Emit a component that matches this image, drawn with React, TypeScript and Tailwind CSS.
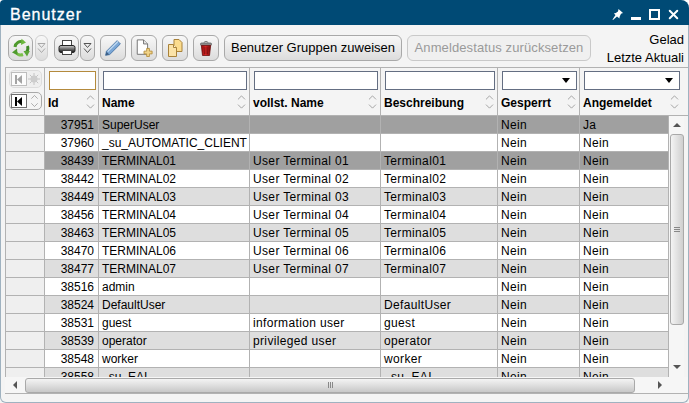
import { X, ChevronUp, ChevronDown } from "lucide-react";

type User = { id: number; name: string; full: string; desc: string; locked: string; online: string; tone: "dark" | "light" | "white" };

const users: User[] = [
  { id: 37951, name: "SuperUser", full: "", desc: "", locked: "Nein", online: "Ja", tone: "dark" },
  { id: 37960, name: "_su_AUTOMATIC_CLIENT", full: "", desc: "", locked: "Nein", online: "Nein", tone: "white" },
  { id: 38439, name: "TERMINAL01", full: "User Terminal 01", desc: "Terminal01", locked: "Nein", online: "Nein", tone: "dark" },
  { id: 38442, name: "TERMINAL02", full: "User Terminal 02", desc: "Terminal02", locked: "Nein", online: "Nein", tone: "white" },
  { id: 38449, name: "TERMINAL03", full: "User Terminal 03", desc: "Terminal03", locked: "Nein", online: "Nein", tone: "light" },
  { id: 38456, name: "TERMINAL04", full: "User Terminal 04", desc: "Terminal04", locked: "Nein", online: "Nein", tone: "white" },
  { id: 38463, name: "TERMINAL05", full: "User Terminal 05", desc: "Terminal05", locked: "Nein", online: "Nein", tone: "light" },
  { id: 38470, name: "TERMINAL06", full: "User Terminal 06", desc: "Terminal06", locked: "Nein", online: "Nein", tone: "white" },
  { id: 38477, name: "TERMINAL07", full: "User Terminal 07", desc: "Terminal07", locked: "Nein", online: "Nein", tone: "light" },
  { id: 38516, name: "admin", full: "", desc: "", locked: "Nein", online: "Nein", tone: "white" },
  { id: 38524, name: "DefaultUser", full: "", desc: "DefaultUser", locked: "Nein", online: "Nein", tone: "light" },
  { id: 38531, name: "guest", full: "information user", desc: "guest", locked: "Nein", online: "Nein", tone: "white" },
  { id: 38539, name: "operator", full: "privileged user", desc: "operator", locked: "Nein", online: "Nein", tone: "light" },
  { id: 38548, name: "worker", full: "", desc: "worker", locked: "Nein", online: "Nein", tone: "white" },
  { id: 38558, name: "_su_EAI", full: "", desc: "_su_EAI", locked: "Nein", online: "Nein", tone: "light" },
];

const toneClass = {
  dark: "bg-[#a0a0a0]",
  light: "bg-[#dedede]",
  white: "bg-white",
};

function ToolButton({ children, className = "w-[26px]" }: { children: React.ReactNode; className?: string }) {
  return (
    <div className={`flex h-[26px] shrink-0 items-center justify-center rounded-[6px] border border-[#a9a9a9] bg-gradient-to-b from-[#f8f8f8] to-[#dcdcdc] ${className}`}>
      {children}
    </div>
  );
}

function SortArrows({ className = "" }: { className?: string }) {
  return (
    <div className={`flex flex-col items-center text-[#8c8c8c] ${className}`}>
      <ChevronUp size={13} strokeWidth={1.4} className="-mb-[2px]" />
      <ChevronDown size={13} strokeWidth={1.4} className="-mt-[2px]" />
    </div>
  );
}

function MoreIcon({ color }: { color: string }) {
  return (
    <svg width="9" height="12" viewBox="0 0 9 12" fill="none" stroke={color}>
      <path d="M1 1.500h7L4.500 5.500Z" />
      <path d="M1 6.500 4.500 10.500 8 6.500" />
    </svg>
  );
}

function HeaderCell({ label, width, children }: { label: string; width: string; children: React.ReactNode }) {
  return (
    <div className={`flex h-[47px] shrink-0 flex-col border-r border-[#b2b2b2] pt-[3px] pr-[2px] pl-[4px] ${width}`}>
      {children}
      <div className="relative mt-[5px] flex items-center">
        <span className="-ml-[1px] text-[12px] leading-[16px] font-bold text-black">{label}</span>
        <SortArrows className="absolute -top-[4px] -right-[1px]" />
      </div>
    </div>
  );
}

function FilterInput({ accent = false, dropdown = false }: { accent?: boolean; dropdown?: boolean }) {
  return (
    <div className={`relative h-[19px] w-full shrink-0 border bg-white ${accent ? "border-[#b48a3c]" : "border-[#646e82]"}`}>
      {dropdown && <div className="absolute top-[6px] right-[6px] h-0 w-0 border-x-[4px] border-t-[5px] border-x-transparent border-t-black" />}
    </div>
  );
}

function RefreshIcon() {
  return (
    <svg width="20" height="20" viewBox="0 0 20 20" fill="none">
      <path d="M4 9a6 6 0 0 1 8-5" stroke="#4f9a2d" strokeWidth="3" />
      <path d="M10.500 0.800 15 4.500 10 7Z" fill="#6cb83e" />
      <path d="M16.500 8a6.500 6.500 0 0 1-2 7" stroke="#3f8a28" strokeWidth="3" />
      <path d="M12.500 13 16 18.500 18.800 13Z" fill="#5aa535" />
      <path d="M12 16.500a6.500 6.500 0 0 1-8-3" stroke="#7ac04a" strokeWidth="3" />
      <path d="M1 14.500 6 10.500 6.500 17Z" fill="#4f9a2d" />
    </svg>
  );
}

function PrintIcon() {
  return (
    <svg width="18" height="16" viewBox="0 0 18 16">
      <defs>
        <linearGradient id="pr" x1="0" y1="0" x2="0" y2="1">
          <stop offset="0" stopColor="#ccc" />
          <stop offset="1" stopColor="#111" />
        </linearGradient>
      </defs>
      <rect x="4.500" y="0.500" width="9" height="6" fill="#fff" stroke="#444" />
      <rect x="1" y="5.500" width="16" height="7" rx="2" fill="url(#pr)" stroke="#222" />
      <rect x="4.500" y="10.500" width="9" height="4" fill="#fff" stroke="#444" />
    </svg>
  );
}

function PencilIcon() {
  return (
    <svg width="18" height="18" viewBox="0 0 22 22">
      <path d="M3 15 16 2l4 4L7 19l-5 1Z" fill="#7ba7d6" stroke="#3f6d9f" />
      <path d="M4.500 15.500 17 3" stroke="#c4dcf2" strokeWidth="1.500" />
      <path d="M3 15.500 2 20l4.500-1Z" fill="#3c5f86" />
    </svg>
  );
}

function NewPageIcon() {
  return (
    <svg width="18" height="18" viewBox="0 0 20 20">
      <path d="M2.500 1h7l4.500 4.500V17H2.500Z" fill="#fff" stroke="#6a6a6a" />
      <path d="M9.500 1v4.500H14" fill="#e8e8e8" stroke="#6a6a6a" />
      <path d="M13 10.500h3v3h3v3h-3v3h-3v-3h-3v-3h3Z" fill="#f2d488" stroke="#b58f3c" />
    </svg>
  );
}

function CopyIcon() {
  return (
    <svg width="16" height="18" viewBox="0 0 16 18">
      <path d="M7 .5h5l3 3v9H7Z" fill="#fbdc8e" stroke="#a9823a" />
      <path d="M1.500 5.500h5l3 3v9h-8Z" fill="#fbe3a8" stroke="#a9823a" />
      <path d="M6.500 5.500v3h3" fill="#fff3cf" stroke="#a9823a" />
    </svg>
  );
}

function TrashIcon() {
  return (
    <svg width="14" height="17" viewBox="0 0 18 20">
      <defs>
        <linearGradient id="tr" x1="0" y1="0" x2="1" y2="0">
          <stop offset="0" stopColor="#8e0d0d" />
          <stop offset="0.450" stopColor="#ee2a2a" />
          <stop offset="1" stopColor="#7a0808" />
        </linearGradient>
      </defs>
      <path d="M6.500 2.500a2.500 1.500 0 0 1 5 0" fill="none" stroke="#555" />
      <rect x="2" y="3" width="14" height="3" rx="1" fill="#9a9a9a" stroke="#555" />
      <path d="M3 6h12l-1.500 13h-9Z" fill="url(#tr)" stroke="#6a0b0b" />
      <path d="M6.500 7.500l.500 10M9 7.500v10M11.500 7.500l-.500 10" stroke="#6a0b0b" />
    </svg>
  );
}

function PinIcon() {
  return (
    <svg width="11" height="11" viewBox="0 0 11 11" fill="#fff">
      <path d="M6.500 0 11 4 9 4.800 7.500 8 7.500 9.500 5 7.500 1 11 0.500 10.500 3.500 6 1.800 4.500 3.800 4 6 2.500Z" />
    </svg>
  );
}

function SunIcon() {
  return (
    <svg width="12" height="12" viewBox="0 0 12 12" stroke="#b8b8b8">
      <path d="M6 0v12M0 6h12M1.800 1.800l8.400 8.400M10.200 1.800 1.800 10.200" />
      <circle cx="6" cy="6" r="3.500" fill="#c4c4c4" stroke="none" />
    </svg>
  );
}

function FirstIcon({ color, border }: { color: string; border: string }) {
  return (
    <div className={`flex h-[14px] w-[16px] items-center justify-center border bg-white ${border}`}>
      <svg width="8" height="9" viewBox="0 0 8 9" fill={color}>
        <rect x="0" y="0" width="2" height="9" />
        <path d="M7 0v9L2 4.500Z" />
      </svg>
    </div>
  );
}

export default function App() {
  return (
    <div className="flex h-[403px] w-[689px] flex-col overflow-hidden rounded-tl-[4px] rounded-tr-[8px] bg-[#f4f4f4] font-['Liberation_Sans',Arial,sans-serif] text-[12px] text-black">
      <div className="flex h-[25px] shrink-0 items-center justify-between bg-[#004a75] pt-[4px] pr-[10px] pl-[10px]">
        <span className="text-[16px] leading-[21px] font-normal tracking-[1px] text-white [-webkit-text-stroke:0.3px_white]">Benutzer</span>
        <div className="flex items-center gap-[8px] text-white">
          <PinIcon />
          <div className="mt-[7px] h-[3px] w-[10px] bg-white" />
          <div className="h-[11px] w-[11px] border-2 border-white" />
          <X size={15} strokeWidth={3.2} className="-mx-[2px]" />
        </div>
      </div>

      <div className="flex min-h-0 flex-1 flex-col rounded-b-[6px] border-x border-b border-[#9fb2c0] pl-[4px]">
        <div className="flex h-[42px] shrink-0 items-center pt-[4px]">
          <ToolButton className="ml-[3px] w-[25px] rounded-[7px]"><RefreshIcon /></ToolButton>
          <ToolButton className="ml-[2px] w-[13px] border-[#cfcfcf]"><MoreIcon color="#a8a8a8" /></ToolButton>
          <ToolButton className="ml-[6px] w-[25px] rounded-[7px]"><PrintIcon /></ToolButton>
          <ToolButton className="ml-[1px] w-[15px]"><MoreIcon color="#555" /></ToolButton>
          <ToolButton className="ml-[5px] w-[26px]"><PencilIcon /></ToolButton>
          <ToolButton className="ml-[5px] w-[26px]"><NewPageIcon /></ToolButton>
          <ToolButton className="ml-[5px] w-[26px]"><CopyIcon /></ToolButton>
          <ToolButton className="ml-[5px] w-[26px]"><TrashIcon /></ToolButton>
          <ToolButton className="ml-[5px] w-[178px] text-[13px]">Benutzer Gruppen zuweisen</ToolButton>
          <div className="ml-[5px] flex h-[26px] w-[184px] shrink-0 items-center justify-center rounded-[6px] border border-[#c9c9c9] bg-[#f0f0f0] text-[13px] tracking-[0.1px] text-[#9a9a9a]">
            Anmeldestatus zurücksetzen
          </div>
          <div className="-mt-[1px] flex h-[38px] flex-1 flex-col items-end whitespace-nowrap pt-[2px] pr-[4px] text-[13px] leading-[18px]">
            <span>Gelad</span>
            <span>Letzte Aktuali</span>
          </div>
        </div>

        <div className="flex shrink-0 border-t border-[#b2b2b2]">
          <div className="flex h-[47px] w-[40px] shrink-0 flex-col gap-[4px] border-x border-[#b2b2b2] pt-[2px] pr-[2px] pl-[3px]">
            <div className="flex h-[18px] items-center justify-between rounded-[5px] border border-[#d8d8d8] bg-[#efefef] pr-[1px] pl-[1px] opacity-80">
              <FirstIcon color="#909090" border="border-[#b0b0b0]" />
              <SunIcon />
            </div>
            <div className="flex h-[18px] items-center justify-between rounded-[5px] border border-[#a9a9a9] bg-[#f4f4f4] pl-[1px]">
              <FirstIcon color="#000" border="border-[#707070]" />
              <SortArrows className="scale-90" />
            </div>
          </div>
          <HeaderCell label="Id" width="w-[54px]"><FilterInput accent /></HeaderCell>
          <HeaderCell label="Name" width="w-[151px]"><FilterInput /></HeaderCell>
          <HeaderCell label="vollst. Name" width="w-[131px]"><FilterInput /></HeaderCell>
          <HeaderCell label="Beschreibung" width="w-[117px]"><FilterInput /></HeaderCell>
          <HeaderCell label="Gesperrt" width="w-[82px]"><FilterInput dropdown /></HeaderCell>
          <div className="w-[102px] shrink-0 [&>div]:border-r-0">
            <HeaderCell label="Angemeldet" width="w-[102px]"><FilterInput dropdown /></HeaderCell>
          </div>
        </div>

        <div className="flex h-[262px] shrink-0 border-t border-[#b2b2b2]">
          <div className="w-[664px] shrink-0 overflow-hidden">
            {users.map((u) => (
              <div key={u.id} className="flex h-[18px] border-b border-[#b2b2b2] leading-[19px]">
                <div className="w-[40px] shrink-0 border-x border-[#b2b2b2] bg-[#efefef]" />
                <div className={`w-[54px] shrink-0 border-r border-[#b2b2b2] pr-[4px] text-right ${toneClass[u.tone]}`}>{u.id}</div>
                <div className={`w-[151px] shrink-0 border-r border-[#b2b2b2] pl-[3px] ${toneClass[u.tone]}`}>{u.name}</div>
                <div className={`w-[131px] shrink-0 border-r border-[#b2b2b2] pl-[3px] tracking-[0.35px] ${toneClass[u.tone]}`}>{u.full}</div>
                <div className={`w-[117px] shrink-0 border-r border-[#b2b2b2] pl-[3px] tracking-[0.35px] ${toneClass[u.tone]}`}>{u.desc}</div>
                <div className={`w-[82px] shrink-0 border-r border-[#b2b2b2] pl-[3px] tracking-[0.35px] ${toneClass[u.tone]}`}>{u.locked}</div>
                <div className={`w-[89px] shrink-0 border-r border-[#b2b2b2] pl-[3px] tracking-[0.35px] ${toneClass[u.tone]}`}>{u.online}</div>
              </div>
            ))}
          </div>
          <div className="flex w-[15px] shrink-0 flex-col items-center bg-[#f6f6f6]">
            <div className="flex h-[18px] w-full items-center justify-center">
              <div className="h-0 w-0 border-x-[4px] border-b-[4px] border-x-transparent border-b-[#555]" />
            </div>
            <div className="flex h-[191px] w-[14px] flex-col items-center justify-center gap-[1px] rounded-[3px] border border-[#a9a9a9] bg-gradient-to-r from-[#f4f4f4] to-[#cfcfcf]">
              <div className="h-[1px] w-[6px] bg-[#888]" />
              <div className="h-[1px] w-[6px] bg-[#888]" />
              <div className="h-[1px] w-[6px] bg-[#888]" />
            </div>
            <div className="mt-auto flex h-[18px] items-center justify-center pb-[2px]">
              <div className="h-0 w-0 border-x-[4px] border-t-[4px] border-x-transparent border-t-[#555]" />
            </div>
          </div>
        </div>

        <div className="flex h-[17px] shrink-0 items-center border-b border-[#b2b2b2] bg-[#f6f6f6]">
          <div className="flex w-[20px] shrink-0 justify-center">
            <div className="h-0 w-0 border-y-[4px] border-r-[4px] border-y-transparent border-r-[#555]" />
          </div>
          <div className="flex h-[15px] w-[610px] shrink-0 items-center justify-center gap-[1px] rounded-[3px] border border-[#a9a9a9] bg-gradient-to-b from-[#f4f4f4] to-[#c8c8c8]">
            <div className="h-[6px] w-[1px] bg-[#888]" />
            <div className="h-[6px] w-[1px] bg-[#888]" />
            <div className="h-[6px] w-[1px] bg-[#888]" />
          </div>
          <div className="flex w-[50px] shrink-0 justify-center">
            <div className="h-0 w-0 border-y-[4px] border-l-[4px] border-y-transparent border-l-[#555]" />
          </div>
        </div>
      </div>
    </div>
  );
}
